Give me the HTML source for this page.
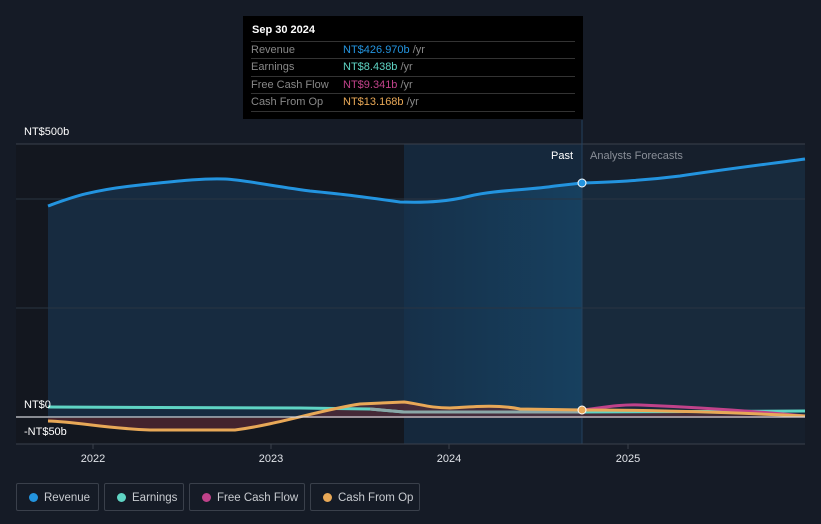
<!DOCTYPE html>
<html><head><meta charset="utf-8"><style>
body{margin:0;width:821px;height:524px;background:#151b26;font-family:"Liberation Sans",sans-serif;overflow:hidden;position:relative}
.tt{position:absolute;left:243px;top:16px;width:340px;height:103px;background:#000;}
.tt .h{position:absolute;left:9px;top:8px;color:#fff;font-size:11px;font-weight:bold}
.row{position:absolute;left:8px;width:324px;border-top:1px solid #333;height:17px;font-size:11px;line-height:17px;color:#888}
.row span.l{position:absolute;left:0}
.row span.v{position:absolute;left:92px}
.leg{position:absolute;top:483px;height:28px;border:1px solid #3a404b;border-radius:2px;font-size:11.5px;color:#c8cbd0;line-height:28px;box-sizing:border-box}
.leg i{position:absolute;left:12px;top:9px;width:9px;height:9px;border-radius:50%}
.leg span{position:absolute;left:27px}
.lab{position:absolute;font-size:11px;color:#fff}
</style></head><body>
<svg width="821" height="524" style="position:absolute;left:0;top:0">
<defs>
<linearGradient id="hl" x1="0" x2="1" y1="0" y2="0"><stop offset="0" stop-color="#163049"/><stop offset="1" stop-color="#17405f"/></linearGradient>
</defs>
<rect x="16" y="144" width="388" height="300" fill="#13171f"/>
<rect x="404" y="144" width="178" height="300" fill="#15283c"/>
<rect x="582" y="144" width="223" height="300" fill="#161f2c"/>
<path d="M48,206 C70,198 90,190 140,185 C170,182 200,178 225,179 C245,180 265,185 310,191 C340,194 350,195 400,202 C430,203 450,201 470,196 C495,190 530,190 555,186 L582,183 C610,182 640,181 680,176 C720,170 760,165 805,159 L805,417 L48,417 Z" fill="#182e44" opacity="0.9"/>
<path d="M404,200 C430,203 450,201 470,196 C495,190 530,190 555,186 L582,183 L582,417 L404,417 Z" fill="url(#hl)"/>
<path d="M582,183 C610,182 640,181 680,176 C720,170 760,165 805,159 L805,417 L582,417 Z" fill="#182a3c"/>
<line x1="16" y1="144" x2="805" y2="144" stroke="#3a414c" stroke-width="1"/>
<line x1="16" y1="199" x2="805" y2="199" stroke="#2a3442" stroke-width="1"/>
<line x1="16" y1="308" x2="805" y2="308" stroke="#2a3442" stroke-width="1"/>
<line x1="582" y1="120" x2="582" y2="444" stroke="#24415e" stroke-width="1"/>
<path d="M48,206 C70,198 90,190 140,185 C170,182 200,178 225,179 C245,180 265,185 310,191 C340,194 350,195 400,202 C430,203 450,201 470,196 C495,190 530,190 555,186 L582,183 C610,182 640,181 680,176 C720,170 760,165 805,159" fill="none" stroke="#2394df" stroke-width="3"/>
<path d="M48,421 C80,422 100,428 150,430 L235,430 C280,424 320,410 360,404 L404,402 C430,408 460,406 495,407 C520,410 560,410 582,410 L805,417 L805,418 L48,418Z" fill="#5a2a33" opacity="0.7"/>
<path d="M48,407 L300,408 L370,409 L404,412 L582,412 L805,411" fill="none" stroke="#5fd4c4" stroke-width="3"/>
<path d="M370,409 L404,412 L582,412" fill="none" stroke="#8aa8a8" stroke-width="3"/>
<path d="M582,410 C600,408 620,404 640,405 C690,407 740,410 805,416" fill="none" stroke="#c0428a" stroke-width="3"/>
<path d="M48,421 C80,422 100,428 150,430 L235,430 C280,424 320,410 360,404 L404,402 C420,404 430,408 450,408 C470,407 495,404 520,409 L582,410 C640,410 700,411 805,416" fill="none" stroke="#e8a857" stroke-width="3"/>
<line x1="16" y1="417" x2="805" y2="417" stroke="#d0d3d8" stroke-width="1.2"/>
<line x1="16" y1="444" x2="805" y2="444" stroke="#3a414c" stroke-width="1"/>
<circle cx="582" cy="183" r="4" fill="#2394df" stroke="#fff" stroke-width="1"/>
<circle cx="582" cy="410" r="4" fill="#e8a857" stroke="#fff" stroke-width="1"/>
<g stroke="#3a414c"><line x1="93" y1="444" x2="93" y2="449"/><line x1="271" y1="444" x2="271" y2="449"/><line x1="449" y1="444" x2="449" y2="449"/><line x1="628" y1="444" x2="628" y2="449"/></g>
<g fill="#e0e3e8" font-size="11" font-family="Liberation Sans" text-anchor="middle"><text x="93" y="462">2022</text><text x="271" y="462">2023</text><text x="449" y="462">2024</text><text x="628" y="462">2025</text></g>
</svg>
<div class="lab" style="left:24px;top:126px">NT$500b</div>
<div class="lab" style="left:24px;top:399px">NT$0</div>
<div class="lab" style="left:24px;top:426px">-NT$50b</div>
<div class="lab" style="left:551px;top:150px">Past</div>
<div class="lab" style="left:590px;top:150px;color:#8a8f98">Analysts Forecasts</div>
<div class="tt">
<div class="h">Sep 30 2024</div>
<div class="row" style="top:25px"><span class="l">Revenue</span><span class="v" style="color:#2394df">NT$426.970b <span style="color:#888">/yr</span></span></div>
<div class="row" style="top:42px"><span class="l">Earnings</span><span class="v" style="color:#5fd4c4">NT$8.438b <span style="color:#888">/yr</span></span></div>
<div class="row" style="top:60px"><span class="l">Free Cash Flow</span><span class="v" style="color:#c0428a">NT$9.341b <span style="color:#888">/yr</span></span></div>
<div class="row" style="top:77px;border-bottom:1px solid #333"><span class="l">Cash From Op</span><span class="v" style="color:#e8a857">NT$13.168b <span style="color:#888">/yr</span></span></div>
</div>
<div class="leg" style="left:16px;width:83px"><i style="background:#2394df"></i><span>Revenue</span></div>
<div class="leg" style="left:104px;width:80px"><i style="background:#5fd4c4"></i><span>Earnings</span></div>
<div class="leg" style="left:189px;width:116px"><i style="background:#c0428a"></i><span>Free Cash Flow</span></div>
<div class="leg" style="left:310px;width:110px"><i style="background:#e8a857"></i><span>Cash From Op</span></div>
</body></html>
